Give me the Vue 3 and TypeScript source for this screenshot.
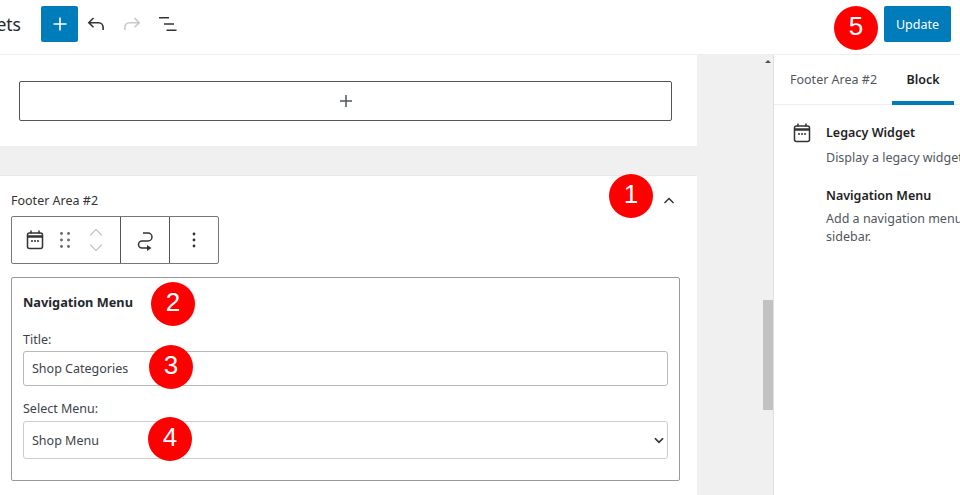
<template>
  <div class="page">
    <header class="topbar">
      <div class="title"><span>Widgets</span></div>
      <button class="add-btn" aria-label="Add block">
        <svg viewBox="0 0 24 24" width="24" height="24"><path d="M12 5.500v13M5.500 12h13" stroke="#fff" stroke-width="1.600" fill="none" /></svg>
      </button>
      <button class="tool undo" aria-label="Undo">
        <svg viewBox="0 0 24 24" width="24" height="24" fill="none" stroke="currentColor" stroke-width="1.600"><path d="M9.500 6 4.800 10.700l4.700 4.600M5 10.700h9.500a4.600 4.600 0 0 1 4.600 4.600V18" /></svg>
      </button>
      <button class="tool redo" aria-label="Redo">
        <svg viewBox="0 0 24 24" width="24" height="24" fill="none" stroke="currentColor" stroke-width="1.600"><path d="M14.500 6l4.700 4.700-4.700 4.600M19 10.700H9.500a4.600 4.600 0 0 0-4.600 4.600V18" /></svg>
      </button>
      <button class="tool list" aria-label="List view">
        <svg viewBox="0 0 24 24" width="24" height="24" fill="currentColor"><path d="M3 5h10v1.600H3zM8 11.200h10v1.600H8zM10.500 17.400h10v1.600h-10z" /></svg>
      </button>
      <div class="spacer"></div>
      <button class="update">Update</button>
    </header>

    <div class="workspace">
      <main class="canvas">
        <section class="card top-card">
          <button class="appender" aria-label="Add block">
            <svg viewBox="0 0 24 24" width="24" height="24"><path d="M12 6v12M6 12h12" stroke="#50575e" stroke-width="1.500" fill="none" /></svg>
          </button>
        </section>

        <section class="card area-card">
          <div class="area-head">
            <span class="area-name">Footer Area #2</span>
            <svg class="collapse" viewBox="0 0 24 24" width="24" height="24" fill="none" stroke="#333" stroke-width="1.500"><path d="M7.500 14 12 9.500l4.500 4.500" /></svg>
          </div>

          <div class="block-toolbar">
            <div class="tb-group first">
              <svg viewBox="0 0 24 24" width="24" height="24" fill="none" stroke="#333" stroke-width="1.500">
                <rect x="4.500" y="5" width="15" height="15.500" rx="2" />
                <path d="M4.500 8.500h15" stroke-width="2.500" />
                <path d="M8 2.500v3M16 2.500v3" />
                <path d="M8 13h2M11 13h2M14 13h2" stroke-width="1.600" />
              </svg>
              <svg class="tb-drag" viewBox="0 0 24 24" width="24" height="24" fill="#666">
                <circle cx="8.500" cy="5.500" r="1.400" /><circle cx="15.500" cy="5.500" r="1.400" />
                <circle cx="8.500" cy="12" r="1.400" /><circle cx="15.500" cy="12" r="1.400" />
                <circle cx="8.500" cy="18.500" r="1.400" /><circle cx="15.500" cy="18.500" r="1.400" />
              </svg>
              <div class="tb-moves">
                <svg viewBox="0 0 16 12" width="16" height="12" fill="none" stroke="#c8c8c8" stroke-width="1.300"><path d="M2 9.500 8 3.500l6 6" /></svg>
                <svg viewBox="0 0 16 12" width="16" height="12" fill="none" stroke="#c8c8c8" stroke-width="1.300"><path d="M2 2.500l6 6 6-6" /></svg>
              </div>
            </div>
            <div class="tb-group second">
              <svg viewBox="0 0 24 24" width="24" height="24" fill="none" stroke="#333" stroke-width="1.500">
                <path d="M10 5h5a4 4 0 0 1 0 8H9a3.500 3.500 0 0 0 0 7h6" />
                <path d="M14 17l4.500 3-4.500 3z" fill="#333" stroke="none" />
              </svg>
            </div>
            <div class="tb-group third">
              <svg viewBox="0 0 24 24" width="24" height="24" fill="#333">
                <circle cx="12" cy="6" r="1.400" /><circle cx="12" cy="12" r="1.400" /><circle cx="12" cy="18" r="1.400" />
              </svg>
            </div>
          </div>

          <form class="widget-form" @submit.prevent>
            <h3>Navigation Menu</h3>
            <label for="nav-title">Title:</label>
            <input id="nav-title" v-model="title" type="text" />
            <label for="nav-menu">Select Menu:</label>
            <div class="select-wrap">
              <select id="nav-menu" v-model="menu">
                <option v-for="m in menus" :key="m" :value="m">{{ m }}</option>
              </select>
              <svg viewBox="0 0 24 24" width="14" height="14" fill="none" stroke="#333" stroke-width="3"><path d="M5 9l7 7 7-7" /></svg>
            </div>
          </form>
        </section>
      </main>

      <div class="gutter">
        <div class="scrollbar">
          <span class="arrow"></span>
          <span class="thumb"></span>
        </div>
      </div>

      <aside class="sidebar">
        <nav class="tabs">
          <span class="tab">Footer Area #2</span>
          <span class="tab active">Block</span>
        </nav>
        <div class="block-info">
          <svg class="info-icon" viewBox="0 0 24 24" width="24" height="24" fill="none" stroke="#333" stroke-width="1.500">
            <rect x="4.500" y="5" width="15" height="15.500" rx="2" />
            <path d="M4.500 8.500h15" stroke-width="2.500" />
            <path d="M8 2.500v3M16 2.500v3" />
            <path d="M8 13h2M11 13h2M14 13h2" stroke-width="1.600" />
          </svg>
          <div class="info-text">
            <h4>Legacy Widget</h4>
            <p class="nowrap">Display a legacy widget.</p>
            <h4 class="second-title">Navigation Menu</h4>
            <p class="nowrap">Add a navigation menu to your</p>
            <p>sidebar.</p>
          </div>
        </div>
      </aside>
    </div>

    <span v-for="b in badges" :key="b.n" class="badge" :style="{ left: b.x + 'px', top: b.y + 'px' }">{{ b.n }}</span>
  </div>
</template>

<script setup lang="ts">
import { ref } from 'vue'

const title = ref('Shop Categories')
const menu = ref('Shop Menu')
const menus = ['Shop Menu']

const badges = [
  { n: 1, x: 609, y: 174 },
  { n: 2, x: 151, y: 282 },
  { n: 3, x: 149, y: 345 },
  { n: 4, x: 148, y: 417 },
  { n: 5, x: 834, y: 6 }
]
</script>

<style>
html,
body {
  margin: 0;
  overflow: hidden;
}
</style>

<style scoped>
.page {
  position: relative;
  width: 960px;
  height: 495px;
  overflow: hidden;
  background: #fff;
  color: #1e1e1e;
  font-family: "Noto Sans", "Open Sans", sans-serif;
  font-size: 12.5px;
  display: flex;
  flex-direction: column;
}

button {
  font-family: inherit;
  border: none;
  background: none;
  padding: 0;
  display: flex;
  align-items: center;
  justify-content: center;
}

.topbar {
  height: 55px;
  flex: none;
  box-sizing: border-box;
  border-bottom: 1px solid #eeeeee;
  display: flex;
  align-items: flex-start;
  padding-top: 6px;
}

.title {
  width: 21px;
  height: 36px;
  margin-right: 20px;
  display: flex;
  justify-content: flex-end;
  align-items: center;
  font-size: 17.5px;
  overflow: hidden;
  color: #23282d;
}

.add-btn {
  width: 37px;
  height: 36px;
  background: #007cba;
  border-radius: 2px;
}

.tool {
  width: 24px;
  height: 36px;
}

.undo {
  margin-left: 6px;
  color: #333;
}

.redo {
  margin-left: 12px;
  color: #c8c8c8;
}

.list {
  margin-left: 12px;
  color: #333;
}

.spacer {
  flex: 1;
}

.update {
  width: 67px;
  height: 36px;
  margin-right: 9px;
  background: #007cba;
  color: #fff;
  border-radius: 2px;
  font-size: 12.5px;
}

.workspace {
  flex: 1;
  display: flex;
  min-height: 0;
}

.canvas {
  width: 697px;
  flex: none;
  background: #f0f0f0;
  display: flex;
  flex-direction: column;
  gap: 29px;
}

.card {
  background: #fff;
}

.top-card {
  height: 91px;
  box-sizing: border-box;
  padding: 26px 25px 0 19px;
}

.appender {
  width: 100%;
  height: 40px;
  box-sizing: border-box;
  border: 1px solid #555;
  border-radius: 2px;
  background: #fff;
}

.area-card {
  flex: 1;
  border-top: 1px solid #e8e8e8;
  padding: 0 17px 0 11px;
}

.area-head {
  height: 40px;
  display: flex;
  align-items: flex-end;
  justify-content: space-between;
}

.area-name {
  line-height: 18px;
  margin-bottom: 6px;
  color: #333;
}

.collapse {
  margin-right: -1px;
  margin-bottom: 3px;
}

.block-toolbar {
  width: 208px;
  height: 48px;
  box-sizing: border-box;
  border: 1px solid #777;
  border-radius: 2px;
  display: flex;
}

.tb-group {
  display: flex;
  align-items: center;
  box-sizing: border-box;
}

.tb-group + .tb-group {
  border-left: 1px solid #555;
  justify-content: center;
}

.first {
  width: 108px;
  padding-left: 11px;
}

.second {
  width: 49px;
}

.third {
  flex: 1;
}

.tb-drag {
  margin-left: 6px;
}

.tb-moves {
  margin-left: 11px;
  display: flex;
  flex-direction: column;
  gap: 4px;
}

.widget-form {
  margin-top: 13px;
  width: 669px;
  height: 204px;
  box-sizing: border-box;
  border: 1px solid #999;
  border-radius: 2px;
  padding: 0 11px;
  display: flex;
  flex-direction: column;
}

.widget-form h3 {
  margin: 15px 0 0;
  font-size: 12.75px;
  font-weight: 700;
  line-height: 18px;
  color: #23282d;
}

.widget-form label {
  margin-top: 20px;
  line-height: 18px;
  color: #3c434a;
}

.widget-form label + input {
  margin-top: 2px;
}

.widget-form input ~ label {
  margin-top: 14px;
}

.widget-form input,
.widget-form select {
  width: 100%;
  box-sizing: border-box;
  border: 1px solid #b8b8b8;
  border-radius: 3px;
  background: #fff;
  font-family: inherit;
  font-size: 12.5px;
  color: #3c434a;
  padding: 0 8px;
  outline: none;
  appearance: none;
}

.widget-form input {
  height: 35px;
}

.select-wrap {
  position: relative;
  margin-top: 3px;
}

.widget-form select {
  height: 38px;
  display: block;
  border-color: #ccc;
}

.select-wrap svg {
  position: absolute;
  right: 2px;
  top: 12px;
  pointer-events: none;
}

.gutter {
  flex: 1;
  background: #f0f0f0;
  display: flex;
  justify-content: flex-end;
}

.scrollbar {
  width: 11px;
  display: flex;
  flex-direction: column;
  align-items: center;
  padding-top: 5px;
}

.arrow {
  width: 0;
  height: 0;
  border-left: 3px solid transparent;
  border-right: 3px solid transparent;
  border-bottom: 3px solid #505050;
}

.thumb {
  width: 10px;
  height: 110px;
  margin-top: 237px;
  background: #c2c2c2;
}

.sidebar {
  width: 187px;
  flex: none;
  box-sizing: border-box;
  border-left: 1px solid #e0e0e0;
  background: #fff;
  overflow: hidden;
}

.tabs {
  height: 50px;
  box-sizing: border-box;
  border-bottom: 1px solid #eeeeee;
  display: flex;
  white-space: nowrap;
}

.tab {
  line-height: 49px;
  color: #50575e;
  padding: 0 15px 0 16px;
}

.tab.active {
  width: 62px;
  box-sizing: border-box;
  padding: 0;
  text-align: center;
  color: #1e1e1e;
  font-weight: 600;
  height: 50px;
  border-bottom: 4px solid #007cba;
}

.block-info {
  display: flex;
  padding: 16px 0 0 16px;
  gap: 8px;
}

.info-icon {
  flex: none;
}

.info-text {
  min-width: 0;
  margin-left: 4px;
  color: #50575e;
  line-height: 18px;
}

.info-text h4 {
  margin: 3px 0 7px;
  font-size: 12.5px;
  font-weight: 600;
  line-height: 18px;
  color: #1e1e1e;
}

.info-text .second-title {
  margin-top: 20px;
  margin-bottom: 5px;
}

.info-text p {
  margin: 0;
}

.nowrap {
  white-space: nowrap;
}

.badge {
  position: absolute;
  width: 44px;
  height: 44px;
  border-radius: 50%;
  background: #ff0000;
  color: #fff;
  font-family: "Liberation Sans", Arial, sans-serif;
  font-size: 26px;
  line-height: 41px;
  text-align: center;
}
</style>
